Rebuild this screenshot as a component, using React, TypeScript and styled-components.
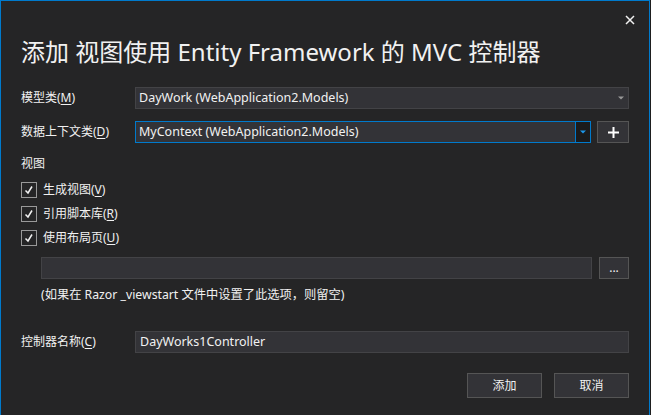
import React from 'react';
import styled, { createGlobalStyle } from 'styled-components';

const Global = createGlobalStyle`
  html, body { margin: 0; padding: 0; background: #1e1e1e; }
  body { font-family: "Noto Sans", "Noto Sans CJK SC", sans-serif; }
`;

const Dialog = styled.div`
  box-sizing: border-box;
  width: 650px;
  height: 415px;
  background: #252526;
  border: 1px solid #007acc;
  border-bottom: none;
  padding: 0 20px;
  color: #f1f1f1;
  font-size: 12px;
  display: flex;
  flex-direction: column;
  overflow: hidden;
`;

const TopBar = styled.div`
  box-sizing: border-box;
  height: 36px;
  padding-top: 13px;
  margin-right: -7px;
  display: flex;
  justify-content: flex-end;
  align-items: flex-start;
`;

const CloseButton = styled.div`
  width: 12px;
  height: 12px;
  display: flex;
  align-items: center;
  justify-content: center;
`;

const Title = styled.h1`
  margin: 0;
  font-size: 24px;
  line-height: 30px;
  height: 30px;
  font-weight: 400;
  white-space: nowrap;
  color: #f1f1f1;
`;

const FieldRow = styled.div<{ $top: number }>`
  margin-top: ${p => p.$top}px;
  display: grid;
  grid-template-columns: 114px 1fr;
  align-items: center;
  height: 22px;
`;

const Label = styled.div`
  line-height: 16px;
  white-space: nowrap;
  u { text-underline-offset: 2px; }
`;

const Controls = styled.div`
  display: flex;
  gap: 6px;
  height: 22px;
`;

const Combo = styled.div<{ $focused?: boolean }>`
  box-sizing: border-box;
  flex: 1;
  height: 22px;
  display: flex;
  background: #333337;
  border: 1px solid ${p => (p.$focused ? '#007acc' : '#434346')};
`;

const ComboText = styled.div`
  flex: 1;
  padding-left: 3px;
  font-size: 12.5px;
  line-height: 20px;
  white-space: nowrap;
  overflow: hidden;
`;

const DropButton = styled.div<{ $focused?: boolean }>`
  width: 14px;
  display: flex;
  align-items: center;
  justify-content: center;
  background: ${p => (p.$focused ? '#1b1b1c' : 'transparent')};
  border-left: 1px solid ${p => (p.$focused ? '#007acc' : 'transparent')};
`;

const SmallButton = styled.div<{ $w: number }>`
  box-sizing: border-box;
  width: ${p => p.$w}px;
  height: 22px;
  background: #333337;
  border: 1px solid #555555;
  display: flex;
  align-items: center;
  justify-content: center;
  line-height: 16px;
`;

const SectionLabel = styled.div`
  margin-top: 13px;
  line-height: 16px;
`;

const CheckList = styled.div`
  margin-top: 6px;
  display: flex;
  flex-direction: column;
`;

const CheckRow = styled.div`
  height: 24px;
  display: flex;
  align-items: center;
  gap: 6px;
  line-height: 16px;
  u { text-underline-offset: 2px; }
`;

const Box = styled.div`
  box-sizing: border-box;
  width: 16px;
  height: 16px;
  border: 1px solid #999999;
  display: flex;
  align-items: center;
  justify-content: center;
`;

const PathRow = styled.div`
  margin-top: 7px;
  padding-left: 20px;
  display: flex;
  gap: 7px;
  height: 22px;
`;

const TextInput = styled.div`
  box-sizing: border-box;
  flex: 1;
  height: 22px;
  background: #333337;
  border: 1px solid #434346;
  padding-left: 4px;
  font-size: 12.5px;
  line-height: 20px;
  white-space: nowrap;
`;

const Hint = styled.div`
  margin-top: 8px;
  padding-left: 20px;
  font-size: 12.25px;
  line-height: 16px;
  white-space: nowrap;
`;

const Footer = styled.div`
  margin-top: 20px;
  display: flex;
  justify-content: flex-end;
  gap: 12px;
`;

const DialogButton = styled.div`
  box-sizing: border-box;
  width: 75px;
  height: 25px;
  background: #333337;
  border: 1px solid #555555;
  display: flex;
  align-items: center;
  justify-content: center;
  line-height: 16px;
`;

const Arrow = ({ color }: { color: string }) => (
  <svg width="6" height="4" viewBox="0 0 6 4">
    <path d="M0 0.5 H6 L3 3.5 Z" fill={color} />
  </svg>
);

const Check = () => (
  <svg width="14" height="14" viewBox="0 0 14 14">
    <path d="M3.5 7.5 L6 10 L10 3.5" fill="none" stroke="#f1f1f1" strokeWidth="1.5" />
  </svg>
);

export default function App() {
  return (
    <>
      <Global />
      <Dialog>
        <TopBar>
          <CloseButton>
            <svg width="10" height="10" viewBox="0 0 10 10">
              <path d="M1 1 L9 9 M9 1 L1 9" stroke="#f1f1f1" strokeWidth="1.5" />
            </svg>
          </CloseButton>
        </TopBar>
        <Title>添加 视图使用 Entity Framework 的 MVC 控制器</Title>

        <FieldRow $top={20}>
          <Label>模型类(<u>M</u>)</Label>
          <Controls>
            <Combo>
              <ComboText>DayWork (WebApplication2.Models)</ComboText>
              <DropButton>
                <Arrow color="#999999" />
              </DropButton>
            </Combo>
          </Controls>
        </FieldRow>

        <FieldRow $top={12}>
          <Label>数据上下文类(<u>D</u>)</Label>
          <Controls>
            <Combo $focused>
              <ComboText>MyContext (WebApplication2.Models)</ComboText>
              <DropButton $focused>
                <Arrow color="#1c97ea" />
              </DropButton>
            </Combo>
            <SmallButton $w={32}>
              <svg width="11" height="11" viewBox="0 0 11 11">
                <path d="M5.5 0 V11 M0 5.5 H11" stroke="#ffffff" strokeWidth="2" />
              </svg>
            </SmallButton>
          </Controls>
        </FieldRow>

        <SectionLabel>视图</SectionLabel>
        <CheckList>
          <CheckRow>
            <Box><Check /></Box>
            <span>生成视图(<u>V</u>)</span>
          </CheckRow>
          <CheckRow>
            <Box><Check /></Box>
            <span>引用脚本库(<u>R</u>)</span>
          </CheckRow>
          <CheckRow>
            <Box><Check /></Box>
            <span>使用布局页(<u>U</u>)</span>
          </CheckRow>
        </CheckList>

        <PathRow>
          <TextInput />
          <SmallButton $w={30}>...</SmallButton>
        </PathRow>
        <Hint>(如果在 Razor _viewstart 文件中设置了此选项，则留空)</Hint>

        <FieldRow $top={28}>
          <Label>控制器名称(<u>C</u>)</Label>
          <Controls>
            <TextInput>DayWorks1Controller</TextInput>
          </Controls>
        </FieldRow>

        <Footer>
          <DialogButton>添加</DialogButton>
          <DialogButton>取消</DialogButton>
        </Footer>
      </Dialog>
    </>
  );
}
